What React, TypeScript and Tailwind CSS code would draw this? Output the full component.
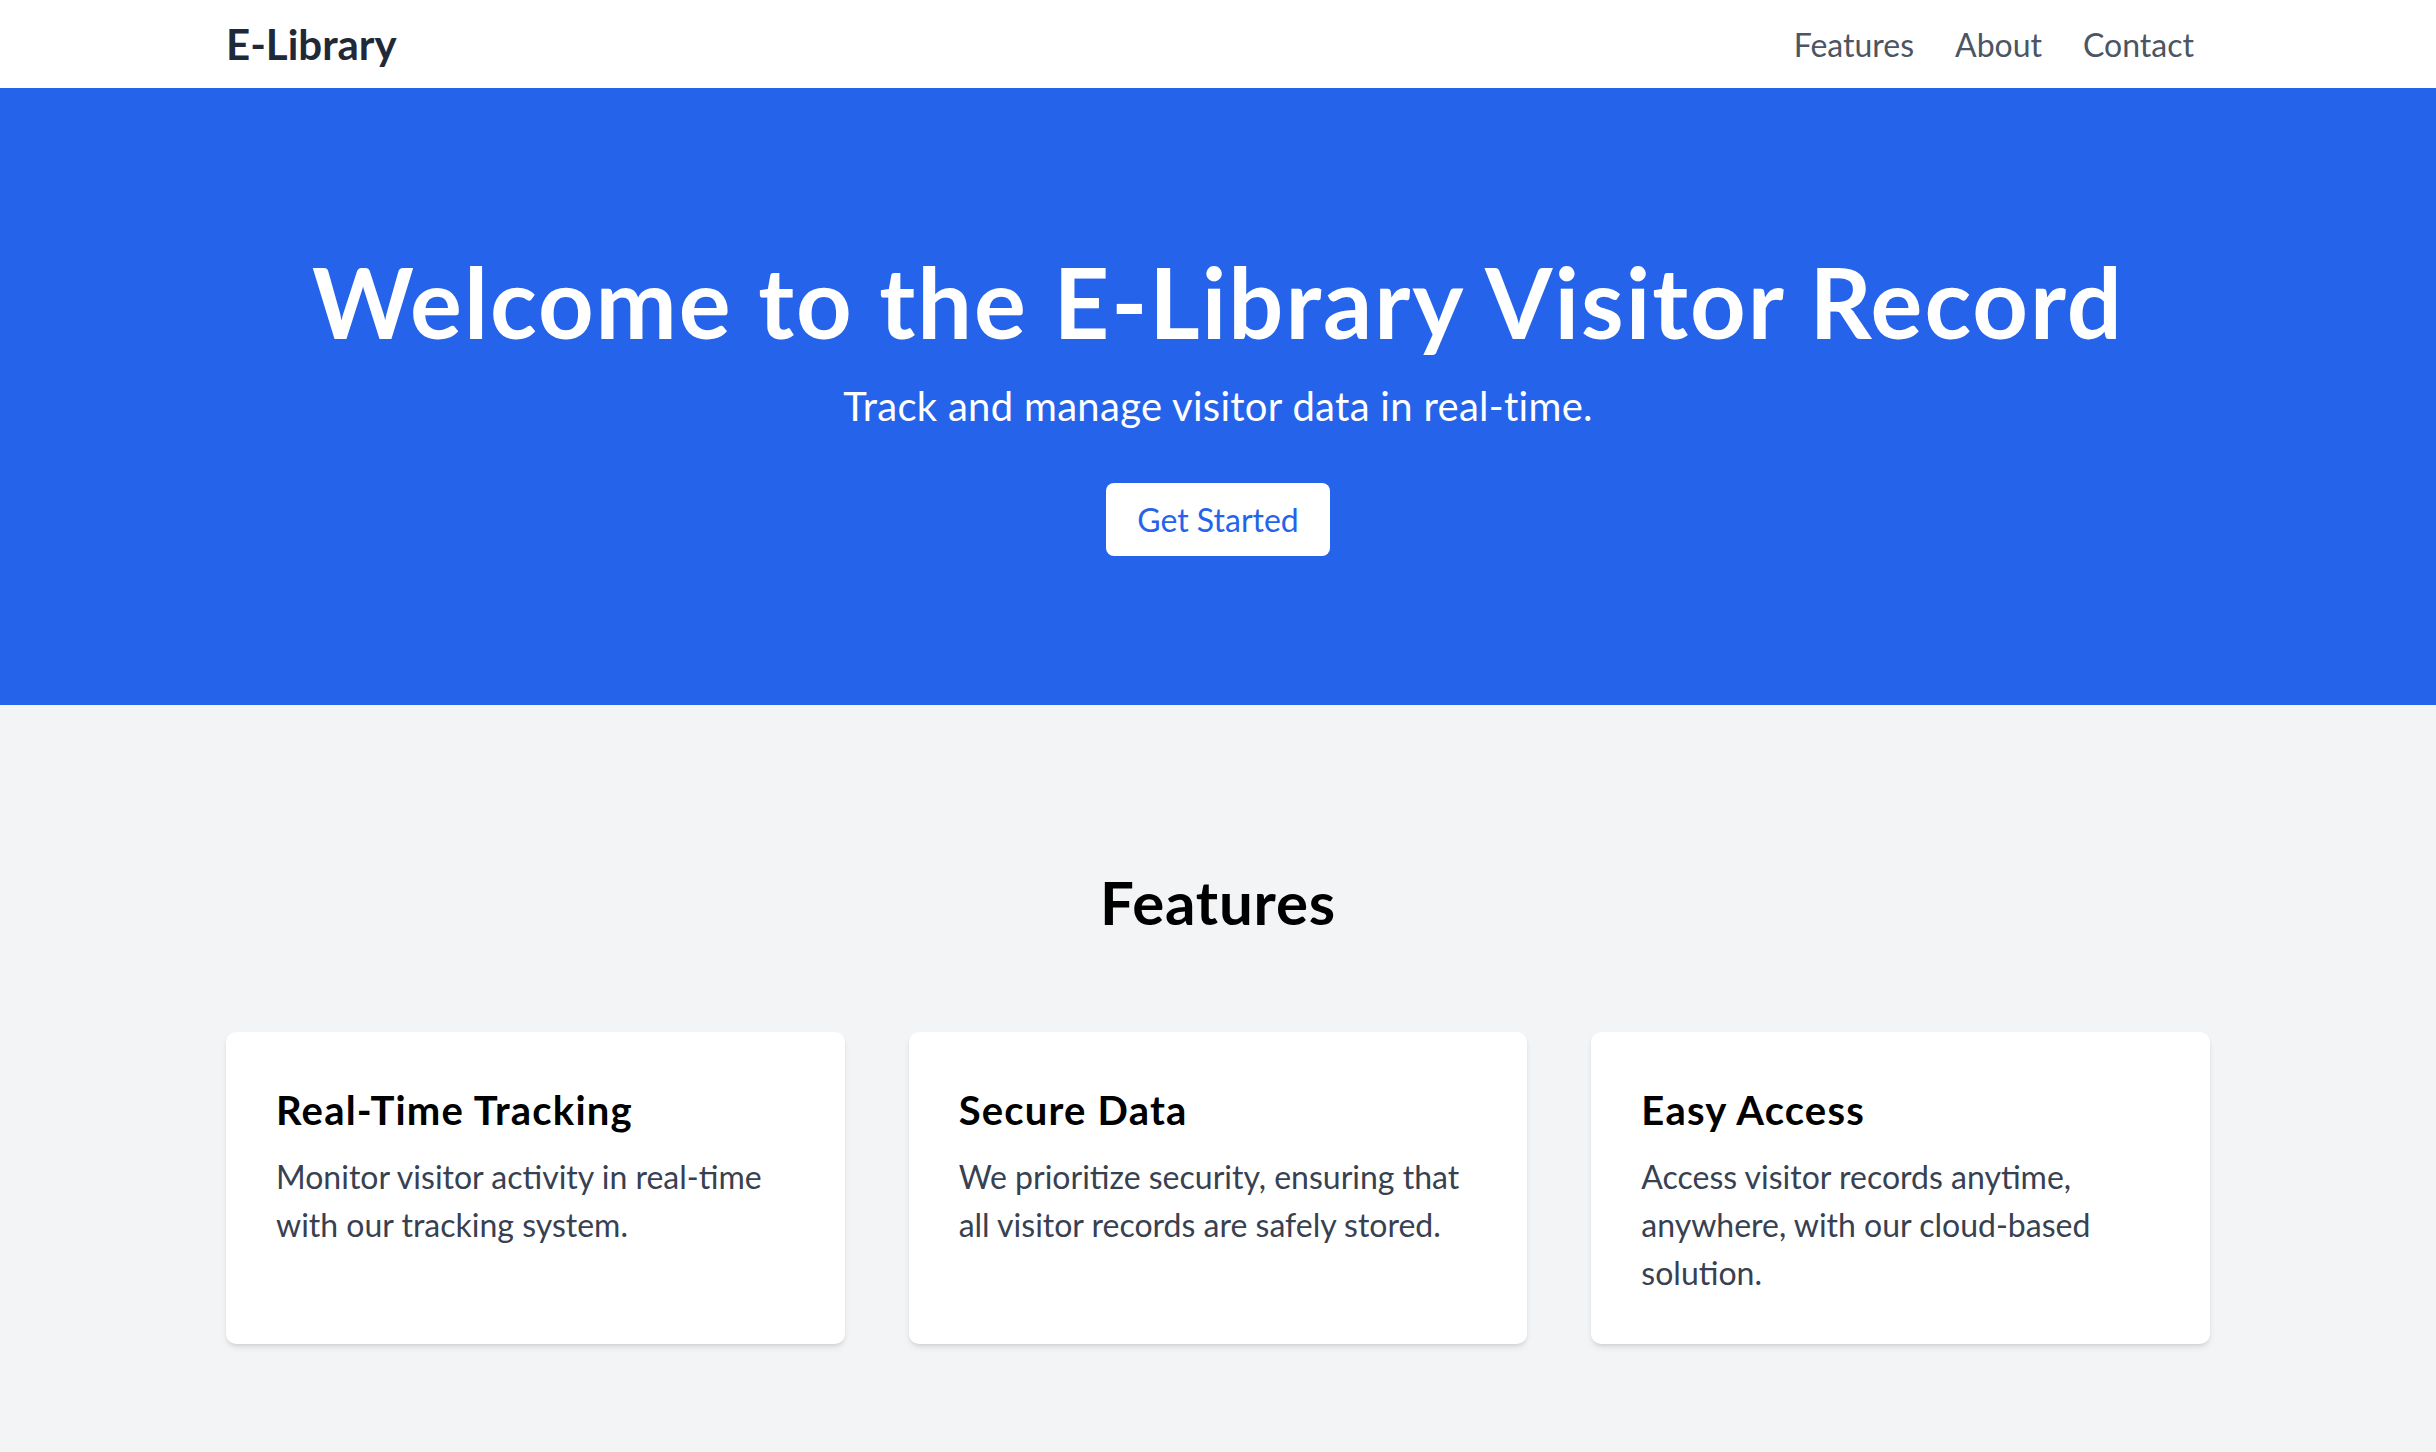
import React from 'react';

const features = [
  {
    title: 'Real-Time Tracking',
    text: 'Monitor visitor activity in real-time with our tracking system.',
  },
  {
    title: 'Secure Data',
    text: 'We prioritize security, ensuring that all visitor records are safely stored.',
  },
  {
    title: 'Easy Access',
    text: 'Access visitor records anytime, anywhere, with our cloud-based solution.',
  },
];

export default function App() {
  return (
    <div className="min-h-screen bg-[#f3f4f6] font-['Segoe_UI','Lato','Liberation_Sans',sans-serif]">
      <header className="bg-white">
        <div className="mx-auto flex h-[88px] w-[1984px] items-center justify-between">
          <div className="text-[42px] font-bold leading-[1.2] text-[#1f2937]">E-Library</div>
          <nav className="flex gap-[41px] pt-[2px] pr-[16px] text-[32px] leading-[1.2] text-[#4b5563]">
            <a href="#features">Features</a>
            <a href="#about">About</a>
            <a href="#contact">Contact</a>
          </nav>
        </div>
      </header>

      <section className="bg-[#2563eb] pt-[165px] pb-[149px] text-center text-white">
        <h1 className="text-[97px] font-bold leading-none tracking-[2px]">Welcome to the E-Library Visitor Record</h1>
        <p className="mt-[26px] text-[40px] leading-[1.5] tracking-[0.3px]">Track and manage visitor data in real-time.</p>
        <button
          type="button"
          className="mt-[47px] h-[73px] w-[224px] rounded-[8px] bg-white text-[32px] text-[#2563eb]"
        >
          Get Started
        </button>
      </section>

      <section id="features" className="pt-[161px] pb-[160px]">
        <h2 className="text-center text-[60px] font-bold leading-[1.2] tracking-[0.8px] text-black">Features</h2>
        <div className="mx-auto mt-[94px] grid w-[1984px] grid-cols-3 gap-[64px]">
          {features.map((f) => (
            <div key={f.title} className="rounded-[10px] bg-white px-[50px] pt-[54px] pb-[47px] shadow-md">
              <h3 className="text-[40px] font-bold leading-[48px] tracking-[1.2px] text-black">{f.title}</h3>
              <p className="mt-[19px] text-[32px] leading-[48px] text-[#374151]">{f.text}</p>
            </div>
          ))}
        </div>
      </section>
    </div>
  );
}
